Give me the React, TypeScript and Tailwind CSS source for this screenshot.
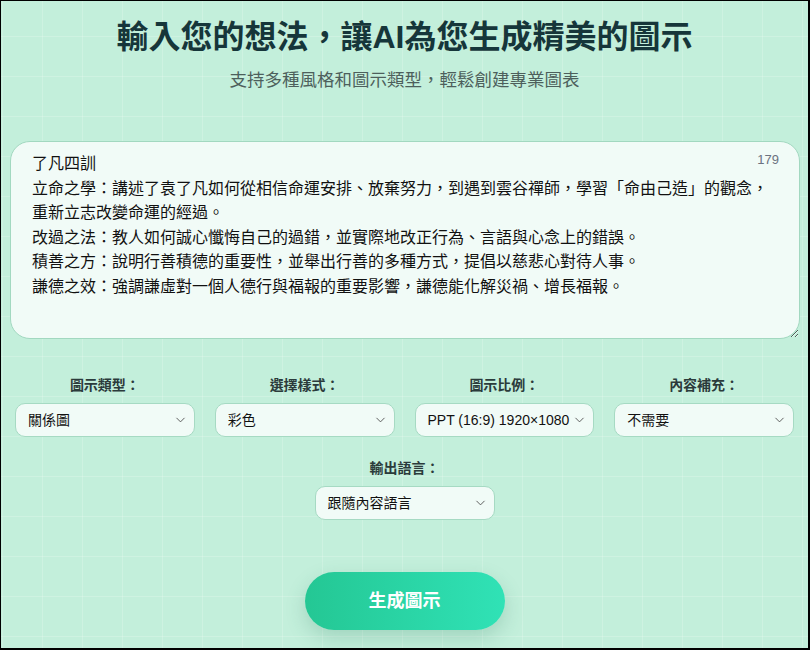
import { ChevronDown } from "lucide-react";

const FONT = "font-['Liberation_Sans','Noto_Sans_CJK_TC',sans-serif]";

const content = `了凡四訓
立命之學：講述了袁了凡如何從相信命運安排、放棄努力，到遇到雲谷禪師，學習「命由己造」的觀念，重新立志改變命運的經過。
改過之法：教人如何誠心懺悔自己的過錯，並實際地改正行為、言語與心念上的錯誤。
積善之方：說明行善積德的重要性，並舉出行善的多種方式，提倡以慈悲心對待人事。
謙德之效：強調謙虛對一個人德行與福報的重要影響，謙德能化解災禍、增長福報。`;

function Field({ label, value, options }: { label: string; value: string; options: string[] }) {
    return (
        <div className="flex w-[180px] flex-col items-center gap-2">
            <span className="text-[14px] leading-5 font-semibold text-[#2b3b3b]">{label}</span>
            <div className="relative w-full">
                <select
                    defaultValue={value}
                    className="h-[34px] w-full appearance-none rounded-[10px] border border-[#a6dac3] bg-[#f1fbf7] pl-[12px] pr-[20px] text-[14px] text-[#111] outline-none"
                >
                    {options.map((o) => (
                        <option key={o}>{o}</option>
                    ))}
                </select>
                <ChevronDown
                    size={15}
                    strokeWidth={1.5}
                    className="pointer-events-none absolute right-[7px] top-1/2 -translate-y-1/2 text-[#555]"
                />
            </div>
        </div>
    );
}

export default function App() {
    return (
        <div
            className={`${FONT} h-[650px] w-[810px] overflow-hidden border-t border-l border-r-2 border-b-2 border-black bg-[#c3efdb] bg-[linear-gradient(to_right,rgba(255,255,255,0.18)_1px,transparent_1px),linear-gradient(to_bottom,rgba(255,255,255,0.18)_1px,transparent_1px)] bg-[size:40px_40px] bg-[position:1px_35px]`}
        >
            <div className="flex flex-col items-center pt-[14px]">
                <h1 className="text-[32px] leading-[44px] font-bold text-[#16363a]">
                    輸入您的想法，讓AI為您生成精美的圖示
                </h1>
                <p className="mt-[9px] text-[17.5px] leading-6 text-[#4d5f5c]">
                    支持多種風格和圖示類型，輕鬆創建專業圖表
                </p>
            </div>

            {/* Input */}
            <div className="relative mx-[9px] mt-[49px]">
                <textarea
                    defaultValue={content}
                    className="block h-[198px] w-[790px] resize-y rounded-[20px] border border-[#a2d8c0] bg-[#f1fbf7] px-[21px] pt-[10px] text-[16px] leading-[24.6px] text-[#111] outline-none"
                />
                <span className="absolute right-[20px] top-[9px] text-[13px] text-[#6b7280]">179</span>
            </div>

            {/* Options */}
            <div className="mt-[36px] flex justify-center gap-5 px-[14px]">
                <Field label="圖示類型：" value="關係圖" options={["關係圖", "流程圖", "心智圖"]} />
                <Field label="選擇樣式：" value="彩色" options={["彩色", "黑白"]} />
                <Field label="圖示比例：" value="PPT (16:9) 1920×1080" options={["PPT (16:9) 1920×1080", "1:1"]} />
                <Field label="內容補充：" value="不需要" options={["不需要", "需要"]} />
            </div>
            <div className="mt-[21px] flex justify-center">
                <Field label="輸出語言：" value="跟隨內容語言" options={["跟隨內容語言", "繁體中文", "English"]} />
            </div>

            <div className="mt-[52px] flex justify-center">
                <button className="h-[58px] w-[200px] rounded-full bg-[linear-gradient(to_right,#24c794,#30e2b6)] text-[18px] font-bold text-white shadow-[0_8px_20px_rgba(40,120,90,0.22)]">
                    生成圖示
                </button>
            </div>
        </div>
    );
}
